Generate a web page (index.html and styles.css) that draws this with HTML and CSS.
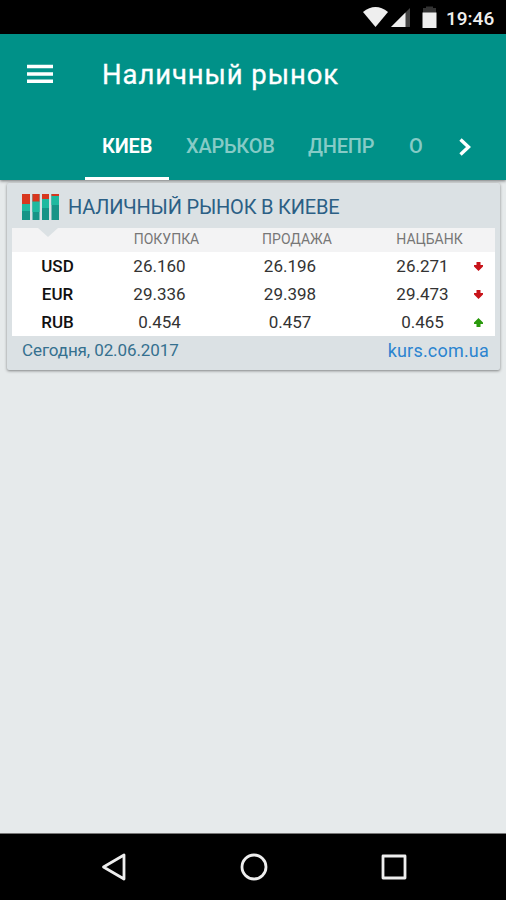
FILE: index.html
```html
<!DOCTYPE html>
<html lang="ru">
<head>
    <meta charset="UTF-8">
    <meta name="viewport" content="width=device-width, initial-scale=1.0">
    <title>Наличный рынок</title>
    <link rel="stylesheet" href="styles.css">
</head>
<body>
    <div class="status-bar">
        <svg class="status-icons" width="76" height="34" viewBox="0 0 76 34">
            <path d="M0 12Q12.500 2 25 12L12.500 27Z" fill="#eee"/>
            <path d="M47 8V27H28Z" fill="#444"/>
            <path d="M42.500 12.500V27H28Z" fill="#eee"/>
            <path d="M60 8h3V6.500h7V8h3v5H60z" fill="#333"/>
            <path d="M59.500 12.500h14V28h-14z" fill="#eee"/>
        </svg>
        <span class="clock">19:46</span>
    </div>

    <header class="app-bar">
        <div class="toolbar">
            <svg class="menu-icon" width="26" height="20" viewBox="0 0 26 20">
                <path d="M0 2.500h26M0 10h26M0 17.300h26" stroke="#fff" stroke-width="3.400"/>
            </svg>
            <h1>Наличный рынок</h1>
        </div>
        <nav class="tabs">
            <a class="tab active">КИЕВ</a>
            <a class="tab kharkov">ХАРЬКОВ</a>
            <a class="tab dnepr">ДНЕПР</a>
            <a class="tab cut">О</a>
            <svg class="next" width="12" height="18" viewBox="0 0 12 18">
                <path d="M1.500 1.500L9.500 9L1.500 16.500" fill="none" stroke="#fff" stroke-width="3.400"/>
            </svg>
        </nav>
    </header>

    <main>
        <section class="card">
            <div class="card-head">
                <svg width="37" height="26" viewBox="0 0 37 26">
                    <path d="M0 0h8v26H0zM10.500 0h7v26h-7zM20 0h7v26h-7zM29.500 0h7.500v26h-7.500z" fill="#179487"/>
                    <path d="M0 10h8v7H0zM10.500 7h7v11h-7zM20 5h7v9h-7zM29.500 2h7.500v9h-7.500z" fill="#1fb9a0"/>
                    <path d="M0 0h8v10H0zM10.500 0h7v7.500h-7zM20 0h7v5h-7zM29.500 0h7.500v2h-7.500z" fill="#d8371f"/>
                </svg>
                <h2>НАЛИЧНЫЙ РЫНОК В КИЕВЕ</h2>
            </div>
            <div class="rates">
                <div class="row labels">
                    <span></span><span>ПОКУПКА</span><span>ПРОДАЖА</span><span>НАЦБАНК</span><span></span>
                </div>
                <div class="row">
                    <b>USD</b><span>26.160</span><span>26.196</span><span>26.271</span>
                    <svg class="down" width="9" height="9" viewBox="0 0 9 9"><path d="M2.500 0h4v3H9v1.500L4.500 9L0 4.500V3h2.500z"/></svg>
                </div>
                <div class="row">
                    <b>EUR</b><span>29.336</span><span>29.398</span><span>29.473</span>
                    <svg class="down" width="9" height="9" viewBox="0 0 9 9"><path d="M2.500 0h4v3H9v1.500L4.500 9L0 4.500V3h2.500z"/></svg>
                </div>
                <div class="row">
                    <b>RUB</b><span>0.454</span><span>0.457</span><span>0.465</span>
                    <svg class="up" width="9" height="9" viewBox="0 0 9 9"><path d="M2.500 9h4V6H9V4.500L4.500 0L0 4.500V6h2.500z"/></svg>
                </div>
            </div>
            <div class="card-foot">
                <span class="date">Сегодня, 02.06.2017</span>
                <a class="source">kurs.com.ua</a>
            </div>
        </section>
    </main>

    <footer class="nav-bar">
        <svg width="26" height="28" viewBox="0 0 26 28"><path d="M23 2V26L2.500 14Z"/></svg>
        <svg width="28" height="28" viewBox="0 0 28 28"><circle cx="14" cy="14" r="12"/></svg>
        <svg width="26" height="28" viewBox="0 0 26 28"><path d="M2 3h22v22H2z"/></svg>
    </footer>
</body>
</html>
```
FILE: styles.css
```css
* { box-sizing: border-box; }
body {
    margin: 0;
    height: 900px;
    display: flex;
    flex-direction: column;
    overflow: hidden;
    background: #e6eaeb;
    font-family: Roboto, "Liberation Sans", sans-serif;
}
h1, h2 { margin: 0; font-weight: 400; white-space: nowrap; }
.status-bar {
    height: 34px;
    display: flex;
    justify-content: flex-end;
    padding-right: 11px;
    background: #000;
}
.status-icons { margin-right: 7px; }
.clock {
    width: 49px;
    line-height: 37px;
    font-size: 19px;
    font-weight: 500;
    color: #eee;
}
.app-bar {
    height: 146px;
    background: #009188;
    color: #fff;
    box-shadow: 0 1px 3px rgba(0, 0, 0, .5);
}
.toolbar {
    height: 80px;
    display: flex;
    align-items: center;
    gap: 49px;
    padding-left: 27px;
}
.toolbar h1 { font-size: 27.5px; letter-spacing: .9px; -webkit-text-stroke: .3px; }
.tabs {
    height: 66px;
    display: flex;
    align-items: center;
    padding-left: 85px;
}
.tab {
    height: 66px;
    padding-left: 17px;
    line-height: 64px;
    font-size: 20px;
    font-weight: 500;
    letter-spacing: -.2px;
    white-space: nowrap;
    color: #86cbc6;
}
.tab.active {
    width: 84px;
    border-bottom: 3px solid #fff;
    font-weight: 600;
    color: #fff;
}
.kharkov { width: 122px; }
.dnepr { width: 101px; }
.cut { width: 67px; }
.card {
    margin: 3px 6px 0 7px;
    height: 187px;
    padding: 0 5px;
    background: #dbe1e4;
    border-radius: 2px;
    box-shadow: 0 1px 3px rgba(0, 0, 0, .45);
}
.card-head {
    height: 45px;
    display: flex;
    align-items: center;
    gap: 9px;
    padding: 2px 0 0 10px;
}
.card-head h2 {
    font-size: 20px;
    line-height: 24px;
    letter-spacing: -.2px;
    color: #2b5f85;
}
.rates {
    position: relative;
    background: #fff;
}
/* notch pointing from the logo */
.rates::before {
    content: "";
    position: absolute;
    left: 26px;
    top: 0;
    border: 10px solid transparent;
    border-top: 9px solid #dbe1e4;
    border-bottom: 0;
}
.row {
    height: 28px;
    display: grid;
    grid-template-columns: 91px 113px 148px 98px 32px;
    align-items: center;
    justify-items: center;
    font-size: 17px;
    color: #333;
}
.row b { font-weight: 500; color: #111; }
.row > :nth-child(4) { margin-left: 19px; }
.labels {
    height: 24px;
    padding-bottom: 2px;
    background: #f3f3f4;
    font-size: 14px;
    color: #777;
}
.labels span { position: relative; left: 7px; white-space: nowrap; }
.down { fill: #c8141a; }
.up { fill: #2a9a0c; }
.card-foot {
    height: 28px;
    display: flex;
    justify-content: space-between;
    align-items: center;
    padding: 0 6px 0 10px;
    font-size: 17px;
}
.date { letter-spacing: -.1px; color: #35708f; }
.source { font-size: 18px; letter-spacing: .2px; color: #2b84d0; }
.nav-bar {
    height: 67px;
    margin-top: auto;
    display: flex;
    align-items: center;
    justify-content: space-between;
    padding: 0 99px 0 101px;
    background: #000;
    border-top: 1px solid #777;
}
.nav-bar svg {
    fill: none;
    stroke: #eee;
    stroke-width: 2.8;
    stroke-linejoin: round;
}
```
